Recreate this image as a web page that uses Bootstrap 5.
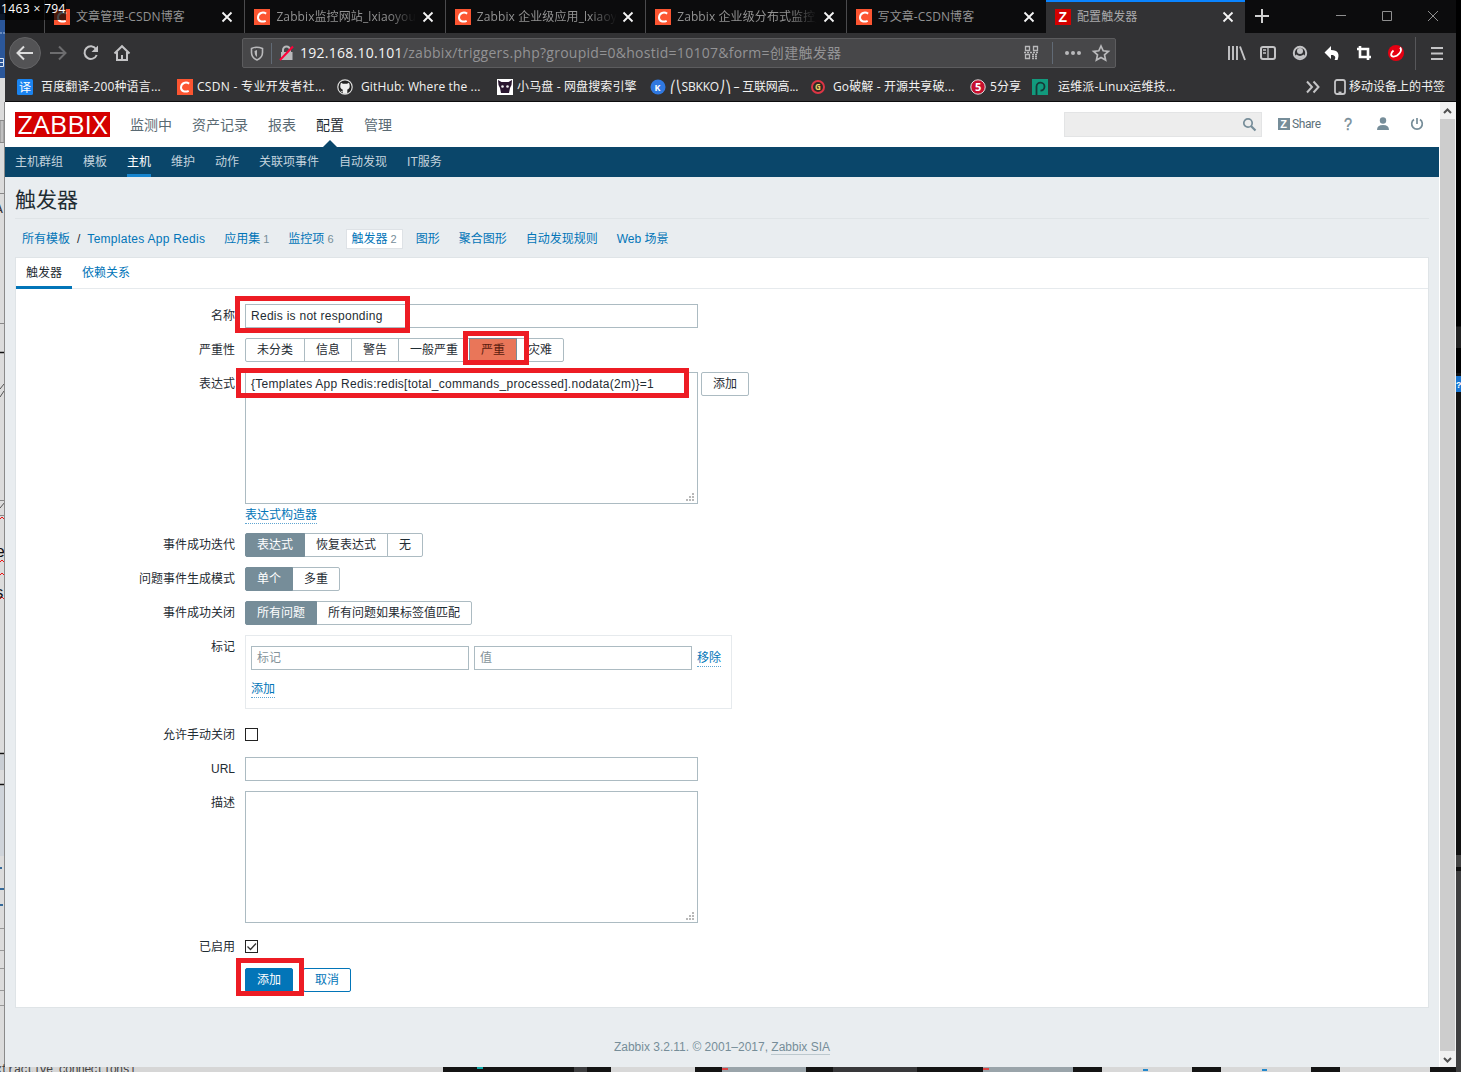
<!DOCTYPE html>
<html lang="zh-CN">
<head>
<meta charset="utf-8">
<title>配置触发器</title>
<link href="https://cdn.jsdelivr.net/npm/bootstrap@5.3.0/dist/css/bootstrap.min.css" rel="stylesheet">
<style>
body{width:1461px;height:1072px;overflow:hidden;background:#141414;position:relative;font-family:"Liberation Sans","Noto Sans CJK SC",sans-serif;font-size:12px;line-height:16px;color:#1f2c33}
.desk{position:absolute;left:0;top:0}
.win{position:relative;width:1451px;height:1067px;margin-left:5px}
.chrome{font-family:"Open Sans","Noto Sans CJK SC",sans-serif;background:#323234;height:102px;border-bottom:1px solid #0c0c0d;box-sizing:border-box}
.tabs{height:33px;background:#0c0c0d}
.btab{width:200.4px;height:33px;padding:0 11px 0 9px;border-left:1px solid #4b4b4d;color:#929292;font-size:12px}
.btab .ttl{width:140px;overflow:hidden;white-space:nowrap;margin-left:6px;letter-spacing:.1px}
.btab.fade-r .ttl{-webkit-mask-image:linear-gradient(90deg,#000 80%,transparent);mask-image:linear-gradient(90deg,#000 80%,transparent)}
.btab.on{background:#323234;border-left:0;box-shadow:inset 0 2px #0a84ff;color:#a9a9ab;width:199px}
.btab svg{flex:none}
.toolbar{height:40px;color:#b9b9bb}
.urlbar{width:874px;height:30px;background:#474749;border:1px solid #5c5c5e;border-radius:2px;font-size:14px;color:#939395;white-space:nowrap}
.urltext{letter-spacing:.27px}
.urlbar b{font-weight:400;color:#f4f4f4}
.marks{height:28px;color:#f2f2f2;font-size:12px;white-space:nowrap;letter-spacing:.13px}
.marks>span{flex:none;display:flex;align-items:center}
.marks svg{flex:none}
.page{height:965px}
.content{width:1434px;background:#e9edf0}
.zhead{height:45px;background:#fff;padding-left:10px}
.logo{width:95px;height:25px;background:#d40000}
.zmenu{gap:20px;margin-left:20px;font-size:14px;color:#5a6a73}
.zmenu .act{color:#1f2c33;position:relative}
.zmenu .act:after{content:"";position:absolute;left:6px;bottom:-15px;border:8px solid transparent;border-top:0;border-bottom-color:#0a466a}
.zsearch{width:198px;height:25px;background:#ededed;border:1px solid #e3e4e5;padding-right:4px}
.subnav{height:30px;background:#0a466a;gap:20px;padding-left:10px;color:#c3d3dd}
.subnav span{height:30px;line-height:31px}
.subnav .act{color:#fff;border-bottom:3px solid #1785cf}
.ptitle{font-size:21px;line-height:24px;height:42px;margin:0 10px;padding-top:11px;border-bottom:1px solid #dfe4e7}
.crumbs{height:38px;padding-left:17px;color:#0275b8;white-space:nowrap;padding-top:1px}
.crumbs small{font-size:11px;color:#768d99;margin-left:3px}
.tpl,.nm,.ex{letter-spacing:.27px}
.panel{margin:0 10px;width:1414px;height:751px;border:1px solid #dfe4e7;background:#fff}
.ptabs{height:31px;border-bottom:1px solid #e6eaed;color:#0275b8}
.ptabs span{padding:0 10px;height:31px;line-height:31px}
.ptabs .act{color:#1f2c33;border-bottom:3px solid #0275b8}
.frow{display:flex;margin-bottom:10px}
.frow>.lab{width:219px;text-align:right;margin-right:10px;height:24px;line-height:25px;flex:none}
.inp{border:1px solid #acbbc2;height:24px;width:453px;padding:0 5px;line-height:22px;background:#fff;position:relative;white-space:nowrap}
.area{height:132px}
.area:after{content:"";position:absolute;right:3px;bottom:2px;width:8px;height:8px;background:linear-gradient(#b8b8b8,#b8b8b8) 6px 0/2px 2px no-repeat,linear-gradient(#b8b8b8,#b8b8b8) 6px 3px/2px 2px no-repeat,linear-gradient(#b8b8b8,#b8b8b8) 3px 3px/2px 2px no-repeat,linear-gradient(#b8b8b8,#b8b8b8) 0 6px/2px 2px no-repeat,linear-gradient(#b8b8b8,#b8b8b8) 3px 6px/2px 2px no-repeat,linear-gradient(#b8b8b8,#b8b8b8) 6px 6px/2px 2px no-repeat}
.seg span,.zbtn{border:1px solid #acbbc2;height:24px;line-height:22px;padding:0 11px;background:#fff;white-space:nowrap}
.zbtn{line-height:23px;border-radius:2px}
.seg span{margin-right:-1px}
.seg span:first-child{border-radius:2px 0 0 2px}
.seg span:last-child{border-radius:0 2px 2px 0}
.seg .sel{background:#768d99;border-color:#768d99;color:#fff;position:relative}
.seg .high{background:#e97659;border-color:#768d99;color:#5a1c0e;position:relative}
.lnk{color:#0275b8;border-bottom:1px dotted #5fa5d2;line-height:15px;display:inline-block}
.tagbox{width:487px;height:74px;border:1px solid #e6eaed;padding:10px 5px}
.ck{width:13px;height:13px;border:1px solid #222;margin-top:5px}
.ck svg{display:block}
.hl{position:absolute;border:5px solid #ed1c24}
.foot{text-align:center;color:#768d99;padding-top:31px}
.foot span{border-bottom:1px solid #bcc8ce}
.sbar{width:17px;background:#f0f0f0;border-left:1px solid #fff}
.sbar i{display:block;width:15px;height:932px;background:#cdcdcd}
.badge-size{position:absolute;left:0;top:0;width:66px;height:20px;background:rgba(0,0,0,.72);color:#fff;font:12px/17px "Open Sans",sans-serif;letter-spacing:.37px;padding-left:1px;white-space:nowrap}
</style>
<script src="https://cdn.jsdelivr.net/npm/bootstrap@5.3.0/dist/js/bootstrap.bundle.min.js"></script>
</head>
<body>
<svg width="0" height="0" style="position:absolute"><defs>
<symbol id="csdn" viewBox="0 0 16 16"><rect width="16" height="16" fill="#fc5531"/><path d="M12.2 4.6C9 2.600 4.300 3.600 4 8.300c-.2 4.200 4.200 5.200 7.700 3.500" fill="none" stroke="#fff" stroke-width="2"/></symbol>
<symbol id="cls" viewBox="0 0 12 12"><path d="M1.500 1.500l9 9m0-9l-9 9" stroke="#f5f5f5" stroke-width="1.800" fill="none"/></symbol>
</defs></svg>

<svg class="desk" width="1461" height="1072" font-family="Liberation Mono">
<rect width="5" height="78" fill="#2b579a"/><rect width="5" height="14" fill="#17305a"/>
<path d="M0 58.500h3.500v8H0M0 62.500h3" stroke="#dfe7f3" fill="none"/><path d="M0 33h2M3 33h2" stroke="#a9bfe0"/>
<rect y="78" width="5" height="994" fill="#dcdcdc"/>
<path d="M0 120.500h4v22H0z" fill="#c0c0c0" stroke="#888"/><path d="M0 193.500h5M0 323.500h5M0 500.500h5M0 515.500h5" stroke="#888" fill="none"/>
<path d="M0 352.500h5M0 753.500h5M0 784.500h5" stroke="#111" stroke-width="1.500"/>
<path d="M0 389l4-5M0 397l4-6M0 508l5-6" stroke="#555"/>
<path d="M0 519l2-2 2 2M0 562l2-2 2 2M0 575l2-2 2 2M0 599l2-2 2 2" stroke="#e11" fill="none"/>
<rect y="755" width="5" height="15" fill="#c9ced4"/><rect y="786" width="5" height="70" fill="#cfd4da"/>
<path d="M0 868h2M0 889h4M0 905h3" stroke="#356a9a" stroke-width="2"/>
<path d="M0 928.500h5M0 950.500h5M0 968.500h5M0 990.500h5M0 1005.500h5" stroke="#999"/>
<text x="-5" y="557" font-size="17" fill="#111">e</text><text x="-6" y="598" font-size="17" fill="#111">s</text>
<text x="-5" y="213" font-size="13" fill="#333">A</text>
<path d="M4.500 102v970" stroke="#8a8a8a"/>
<rect y="1067" width="443" height="5" fill="#d6d6d6"/><text x="-5" y="1073" font-size="12" fill="#444" textLength="141">xtractive connections]</text>
<path d="M574 1067h13v5h-13z" fill="#3e3e40"/><path d="M477 1068h6" stroke="#1aa" stroke-width="2"/>
<path d="M611 1067h84v5h-84zM1102 1067h90v5h-90zM1221 1067h90v5h-90zM1340 1067h90v5h-90z" fill="#d8d8d8"/>
<path d="M722 1067h84v5h-84zM983 1067h90v5h-90z" fill="#9aa4aa"/><path d="M722 1069h6M983 1069h6" stroke="#d44" stroke-width="2"/><path d="M833 1067h84v5h-84z" fill="#38383a"/>
<path d="M1143 1070h5M1262 1070h5" stroke="#28c" stroke-width="2"/>
<rect x="1456" width="5" height="1072" fill="#111"/><rect x="1456" width="5" height="326" fill="#000"/><rect x="1456" y="327" width="5" height="21" fill="#222"/><rect x="1456" y="348" width="5" height="25" fill="#000"/>
<rect x="1456" y="855" width="5" height="12" fill="#444"/><rect x="1456" y="871" width="5" height="201" fill="#3f3f40"/>
<rect x="1456" y="376" width="5" height="16" fill="#1976d2"/><text x="1456" y="388" font-size="9" font-weight="bold" fill="#fff">?</text>
</svg>

<div class="win">
 <div class="chrome">
  <div class="tabs d-flex">
   <div style="width:39px"></div>
   <div class="btab d-flex align-items-center"><svg width="16" height="16"><use href="#csdn"/></svg><span class="ttl">文章管理-CSDN博客</span><svg class="ms-auto" width="12" height="12"><use href="#cls"/></svg></div>
   <div class="btab fade-r d-flex align-items-center"><svg width="16" height="16"><use href="#csdn"/></svg><span class="ttl">Zabbix监控网站_lxiaoyouyou</span><svg class="ms-auto" width="12" height="12"><use href="#cls"/></svg></div>
   <div class="btab fade-r d-flex align-items-center"><svg width="16" height="16"><use href="#csdn"/></svg><span class="ttl">Zabbix 企业级应用_lxiaoyou</span><svg class="ms-auto" width="12" height="12"><use href="#cls"/></svg></div>
   <div class="btab fade-r d-flex align-items-center"><svg width="16" height="16"><use href="#csdn"/></svg><span class="ttl">Zabbix 企业级分布式监控_</span><svg class="ms-auto" width="12" height="12"><use href="#cls"/></svg></div>
   <div class="btab d-flex align-items-center"><svg width="16" height="16"><use href="#csdn"/></svg><span class="ttl">写文章-CSDN博客</span><svg class="ms-auto" width="12" height="12"><use href="#cls"/></svg></div>
   <div class="btab on d-flex align-items-center"><svg width="16" height="16"><rect width="16" height="16" fill="#d40000"/><text x="3.500" y="13" font-size="14" font-weight="bold" fill="#fff" font-family="Liberation Sans">Z</text></svg><span class="ttl">配置触发器</span><svg class="ms-auto" width="12" height="12"><use href="#cls"/></svg></div>
   <svg width="211" height="33" fill="none" stroke="#8f8f8f"><path d="M10 16h14M17 9v14" stroke="#d0d0d0" stroke-width="2"/><path d="M91 15.500h10M137.500 11.500h9v9h-9zM183 11l10 10m0-10l-10 10"/></svg>
  </div>
  <div class="toolbar d-flex align-items-center">
   <svg width="237" height="40" fill="none" stroke="#c4c4c6" stroke-width="2"><circle cx="20" cy="20" r="15.500" fill="#535355" stroke="#636365" stroke-width="1"/><path d="M28 20H13m6-6.500L12.500 20l6.500 6.500" stroke="#ddd"/><path d="M45 20h15m-6-6.500L60.500 20 54 26.500" stroke="#6d6d6f"/><path d="M91 16a6.300 6.300 0 1 0 .7 6"/><path d="M93 12.500v6.500h-6.500z" fill="#c4c4c6" stroke="none"/><path d="M109.500 20.500l7.500-7.300 7.500 7.300M112 19v8h10v-8M117 27v-5"/></svg>
   <div class="urlbar d-flex align-items-center">
    <svg width="57" height="28" fill="none" stroke="#b9b9bb"><path d="M8.500 9.500q5-2.500 11 0v4c0 3.500-2 6-5.500 7.500-3.500-1.500-5.500-4-5.500-7.500z" stroke-width="1.600"/><path d="M14 11v7q-2.500-1.500-2.500-6z" fill="#b9b9bb" stroke="none"/><path d="M28.500 4v21" stroke="#616a75"/><path d="M40 13v-2a3.500 3.500 0 0 1 7 0v2" stroke-width="2"/><rect x="38" y="13" width="11.500" height="8" fill="#b9b9bb" stroke="none"/><path d="M37 21L50 7.500" stroke="#ff0039" stroke-width="2"/></svg>
    <span class="urltext"><b>192.168.10.101</b>/zabbix/triggers.php?groupid=0&amp;hostid=10107&amp;form=创建触发器</span>
    <svg class="ms-auto" width="92" height="28" fill="none" stroke="#b9b9bb"><g stroke-width="1.300"><path d="M2.500 7.500h4v4h-4zM10.500 7.500h4v4h-4zM2.500 15.500h4v4h-4z"/><path d="M1 13.500h14M9 15.500h6M9 17.500h6M9 19.500h6" stroke-dasharray="2 1"/></g><path d="M29.500 3v22" stroke="#616a75"/><g fill="#b9b9bb" stroke="none"><circle cx="44" cy="14" r="2"/><circle cx="50" cy="14" r="2"/><circle cx="56" cy="14" r="2"/></g><path d="M78 7l2.200 4.800 5.200.6-3.900 3.500 1.100 5.100-4.600-2.600-4.600 2.600 1.100-5.100-3.900-3.500 5.200-.6z" stroke-width="1.700"/></svg>
   </div>
   <svg width="340" height="40" viewBox="5 0 340 40" fill="none" stroke="#c4c4c6" stroke-width="2"><path d="M118 13v14M122 13v14M126 13v14M129 13.500l5 13.500" stroke-width="1.900"/><rect x="150" y="14" width="14" height="12" rx="2"/><path d="M157 14v12M152 17h3M152 20h3" stroke-width="1.300"/><circle cx="189" cy="20" r="6.200"/><circle cx="189" cy="18" r="3" fill="#c4c4c6" stroke="none"/><path d="M184.500 22.500q4.500 3.500 9 0" stroke-width="2.400"/><path d="M220 13v4c7 0 9 4 6.500 10-2 0-3 0-3 0 2-3 0-5.500-3.500-5v4l-6.500-6.500z" fill="#fff" stroke="none"/><path d="M249 13v11h11M246 16h11v11" stroke="#fff" stroke-width="2.600"/><circle cx="285" cy="20" r="8" fill="#e60012" stroke="none"/><path d="M289 14.500c3 3-2 9.500-7 9-3-.5-2-4 .5-6" stroke="#fff" stroke-width="1.800"/><path d="M304.500 4v33" stroke="#57575a" stroke-width="1"/><path d="M320 15h12M320 20.500h12M320 26h12"/></svg>
  </div>
  <div class="marks d-flex align-items-center">
   <span style="margin-left:12px;width:160px"><svg width="16" height="16" class="me-2"><rect width="16" height="16" rx="1.500" fill="#1a84f0"/><text x="2" y="12.500" font-size="12" fill="#fff" font-family="Noto Sans CJK SC">译</text></svg>百度翻译-200种语言...</span>
   <span style="width:160px"><svg width="16" height="16" class="me-1"><use href="#csdn"/></svg><span style="letter-spacing:.3px">CSDN - 专业开发者社...</span></span>
   <span style="width:160px"><svg width="16" height="16" style="margin-right:8px"><circle cx="8" cy="8" r="7.200" fill="#222" stroke="#ddd" stroke-width="1.200"/><path d="M4 3.800l2 1h4l2-1c1.200 3 1 6.200-1.700 6.700v4.300H5.700v-4.300C3 10 2.800 6.800 4 3.800zM6 13q-2 .5-2.500-1.500" fill="#eee"/></svg>GitHub: Where the ...</span>
   <span style="width:153px"><svg width="16" height="16" class="me-1"><rect width="16" height="16" fill="#fff"/><path d="M1 1l3.500 2h7L15 1l-.5 5-1.500 3-1 5H4L3 9 1.500 6z" fill="#2a1730"/><circle cx="5.500" cy="7.500" r="1.300" fill="#eee"/><circle cx="10.500" cy="7.500" r="1.300" fill="#eee"/></svg>小马盘 - 网盘搜索引擎</span>
   <span style="width:160px"><svg width="16" height="16" class="me-1"><circle cx="8" cy="8" r="7.500" fill="#2f78e0"/><text x="4.500" y="11.500" font-size="9" font-weight="bold" fill="#fff">K</text></svg><span style="letter-spacing:-.2px">⎛⎝SBKKO⎠⎞ – 互联网高...</span></span>
   <span style="width:160px"><svg width="16" height="16" style="margin-right:7px"><circle cx="8" cy="8" r="6" fill="#302a22" stroke="#dc3545" stroke-width="2"/><text x="5" y="11" font-size="8" font-weight="bold" fill="#f0d36a">G</text></svg>Go破解 - 开源共享破...</span>
   <span style="width:62px"><svg width="16" height="16" class="me-1"><circle cx="8" cy="8" r="7.200" fill="#c8102e" stroke="#ddd"/><text x="5" y="12" font-size="11" font-weight="bold" fill="#fff">5</text></svg>5分享</span>
   <span><svg width="16" height="16" style="margin-right:10px"><rect width="16" height="16" fill="#129a7d"/><path d="M4.500 16V7.500a4 4 0 1 1 4 4.200" fill="none" stroke="#173a38" stroke-width="1.800"/></svg>运维派-Linux运维技...</span>
   <span class="ms-auto" style="margin-right:11px;letter-spacing:0"><svg width="28" height="16" fill="none" stroke="#c4c4c6" stroke-width="2"><path d="M1 2.500l5 5.500-5 5.500M7.500 2.500l5 5.500-5 5.500"/></svg><svg width="15" height="16" fill="none" stroke="#c4c4c6" stroke-width="1.800"><rect x="1" y="1" width="10" height="14" rx="2"/><path d="M4.500 13.500h3"/></svg>移动设备上的书签</span>
  </div>
 </div>
 <div class="page d-flex">
  <div class="content">
   <div class="zhead d-flex align-items-center">
    <svg class="logo" viewBox="0 0 95 25"><text x="2.500" y="21.500" style="font-family:'Open Sans'" font-size="25" fill="#fff" textLength="90" lengthAdjust="spacingAndGlyphs">ZABBIX</text></svg>
    <div class="zmenu d-flex"><span>监测中</span><span>资产记录</span><span>报表</span><span class="act">配置</span><span>管理</span></div>
    <div class="zsearch ms-auto d-flex align-items-center justify-content-end"><svg width="15" height="15" fill="none" stroke="#768d99" stroke-width="1.700"><circle cx="6" cy="6" r="4.200"/><path d="M9 9l4.500 4.500" stroke-width="2.200"/></svg></div>
    <svg width="177" height="25" fill="#768d99"><rect x="16" y="6" width="12" height="12"/><text x="18.300" y="16" font-size="11" font-weight="bold" fill="#fff">Z</text><text x="30" y="16" font-size="12" font-family="Roboto" fill="#5c707a" textLength="29">Share</text><text x="82" y="18" font-size="16" textLength="8" lengthAdjust="spacingAndGlyphs" stroke="#768d99" stroke-width=".4">?</text><circle cx="121" cy="8.500" r="3.200"/><path d="M115 18q0-5 6-5t6 5z"/><path d="M152 7.500a5.300 5.300 0 1 0 6 0M155 6v6" fill="none" stroke="#768d99" stroke-width="1.700"/></svg>
   </div>
   <div class="subnav d-flex"><span>主机群组</span><span>模板</span><span class="act">主机</span><span>维护</span><span>动作</span><span>关联项事件</span><span>自动发现</span><span>IT服务</span></div>
   <div class="ptitle">触发器</div>
   <div class="crumbs d-flex align-items-center"><span>所有模板</span><span style="color:#1f2c33;margin:0 7px">/</span><span class="tpl">Templates App Redis</span><span style="margin-left:19px">应用集<small>1</small></span><span style="margin-left:19px">监控项<small>6</small></span><span class="bg-white border" style="margin-left:12px;padding:1px 5px">触发器<small>2</small></span><span style="margin-left:13px">图形</span><span style="margin-left:19px">聚合图形</span><span style="margin-left:19px">自动发现规则</span><span style="margin-left:19px">Web 场景</span></div>
   <div class="panel">
    <div class="ptabs d-flex"><span class="act">触发器</span><span>依赖关系</span></div>
    <div style="padding-top:15px">
     <div class="frow"><div class="lab">名称</div><div class="inp"><span class="nm">Redis is not responding</span></div></div>
     <div class="frow"><div class="lab">严重性</div><div class="seg d-flex"><span>未分类</span><span>信息</span><span>警告</span><span>一般严重</span><span class="high">严重</span><span>灾难</span></div></div>
     <div class="frow" style="margin-bottom:9px"><div class="lab">表达式</div><div><div class="d-flex"><div class="inp area"><span class="ex">{Templates App Redis:redis[total_commands_processed].nodata(2m)}=1</span></div><span class="zbtn" style="margin-left:3px">添加</span></div><div style="height:20px;padding-top:3px"><span class="lnk">表达式构造器</span></div></div></div>
     <div class="frow"><div class="lab">事件成功迭代</div><div class="seg d-flex"><span class="sel">表达式</span><span>恢复表达式</span><span>无</span></div></div>
     <div class="frow"><div class="lab">问题事件生成模式</div><div class="seg d-flex"><span class="sel">单个</span><span>多重</span></div></div>
     <div class="frow"><div class="lab">事件成功关闭</div><div class="seg d-flex"><span class="sel">所有问题</span><span>所有问题如果标签值匹配</span></div></div>
     <div class="frow" style="margin-bottom:14px"><div class="lab">标记</div><div class="tagbox"><div class="d-flex" style="gap:5px;color:#85939a"><div class="inp" style="width:218px">标记</div><div class="inp" style="width:218px">值</div><div style="padding-top:4px"><span class="lnk">移除</span></div></div><div style="padding-top:11px"><span class="lnk">添加</span></div></div></div>
     <div class="frow"><div class="lab">允许手动关闭</div><div class="ck"></div></div>
     <div class="frow"><div class="lab">URL</div><div class="inp"></div></div>
     <div class="frow" style="margin-bottom:12px"><div class="lab">描述</div><div class="inp area"></div></div>
     <div class="frow" style="margin-bottom:9px"><div class="lab">已启用</div><div class="ck"><svg width="11" height="11"><path d="M1.500 5.500l3 3L10 2.500" fill="none" stroke="#333" stroke-width="1.300"/></svg></div></div>
     <div class="frow"><div class="lab"></div><span class="zbtn" style="background:#0275b8;border-color:#0275b8;color:#fff">添加</span><span class="zbtn" style="margin-left:10px;border-color:#0275b8;color:#0275b8">取消</span></div>
    </div>
   </div>
   <div class="foot">Zabbix 3.2.11. © 2001–2017, <span>Zabbix SIA</span></div>
  </div>
  <div class="sbar"><svg class="d-block" width="15" height="17"><path d="M4 11l3.500-3.500L11 11" fill="none" stroke="#505050" stroke-width="2"/></svg><i></i><svg class="d-block" width="15" height="16"><path d="M4 7l3.500 3.500L11 7" fill="none" stroke="#505050" stroke-width="2"/></svg></div>
 </div>
</div>
<div class="hl" style="left:235px;top:296px;width:175px;height:37px"></div>
<div class="hl" style="left:463px;top:331px;width:66px;height:34px"></div>
<div class="hl" style="left:236px;top:368px;width:453px;height:30px"></div>
<div class="hl" style="left:236px;top:958px;width:68px;height:38px"></div>
<div class="badge-size">1463 × 794</div>
</body>
</html>
